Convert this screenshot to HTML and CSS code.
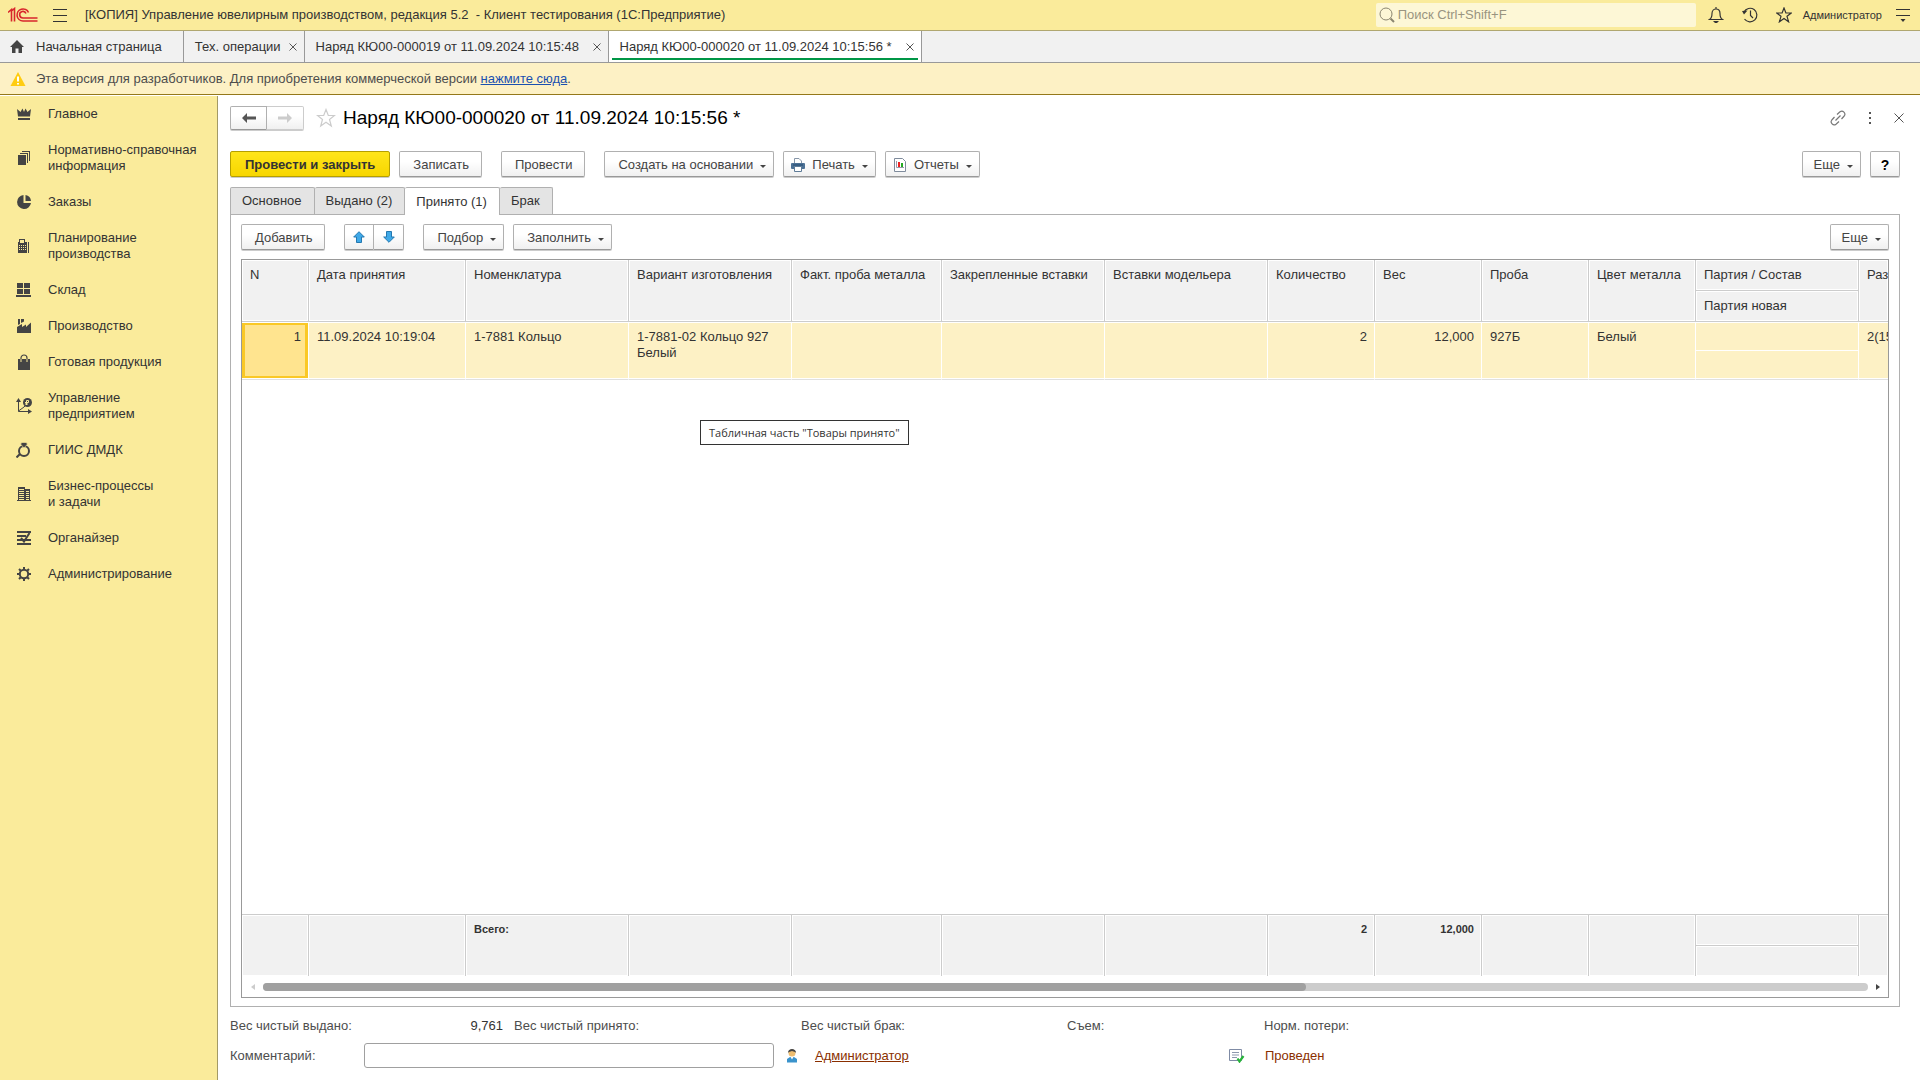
FILE: index.html
```html
<!DOCTYPE html>
<html lang="ru">
<head>
<meta charset="utf-8">
<title>Наряд КЮ00-000020 от 11.09.2024 10:15:56 *</title>
<link rel="stylesheet" href="styles.css">
</head>
<body>
<header class="topbar">
  <svg class="logo" width="30" height="16" viewBox="0 0 30 16" fill="none" stroke="#d8262c" stroke-width="1.600"><path d="M0 5.500L3.500 2.500V14.500M6.500 14.500V1.500L3.500 4"/><path d="M20.500 5.500A6 6 0 1 0 15 14H29.500"/><path d="M18 6.500A3.300 3.300 0 1 0 15 11H29.500"/></svg>
  <button class="icon-btn menu-btn" aria-label="Меню"><svg width="14" height="14" viewBox="0 0 14 14" stroke="#333" fill="none"><path d="M0 1.500H14M0 7.500H14M0 13.500H14"/></svg></button>
  <div class="app-title">[КОПИЯ] Управление ювелирным производством, редакция 5.2&nbsp; - Клиент тестирования (1С:Предприятие)</div>
  <label class="search">
    <svg width="16" height="16" viewBox="0 0 16 16" fill="none" stroke="#8b8670"><circle cx="7" cy="7" r="6"/><path d="M11.500 11.500L15 15" stroke-width="2"/></svg>
    <input type="search" placeholder="Поиск Ctrl+Shift+F" aria-label="Поиск">
  </label>
  <div class="top-icons">
    <button class="icon-btn" aria-label="Уведомления"><svg width="16" height="16" viewBox="0 0 16 16" fill="none" stroke="#333" stroke-width="1.200"><path d="M1.500 12.500C4 11 4 9 4 6.500C4 3.500 6 2 8 2C10 2 12 3.500 12 6.500C12 9 12 11 14.500 12.500ZM8 0V2"/><path d="M5 14H11L9 16H7Z" fill="#333" stroke="none"/></svg></button>
    <button class="icon-btn" aria-label="История"><svg width="16" height="16" viewBox="0 0 16 16" fill="none" stroke="#333" stroke-width="1.200"><path d="M2 5A6.800 6.800 0 1 1 2.500 12"/><path d="M8.500 3.500V8.500L11 11"/><path d="M0 4L5.500 3.500L2 7.500Z" fill="#333" stroke="none"/></svg></button>
    <button class="icon-btn" aria-label="Избранное"><svg width="16" height="16" viewBox="0 0 16 16" fill="none" stroke="#333" stroke-width="1.200"><path d="M8 1L9.900 6H15.200L11 9.300L12.600 14.800L8 11.500L3.400 14.800L5 9.300L.8 6H6.100Z"/></svg></button>
  </div>
  <a class="user" href="#">Администратор</a>
  <button class="icon-btn" aria-label="Настройки"><svg width="14" height="14" viewBox="0 0 14 14" fill="none" stroke="#333"><path d="M0 1.500H14M0 7.500H14"/><path d="M4.500 11H9.500L7 14Z" fill="#333" stroke="none"/></svg></button>
</header>

<nav class="windows" aria-label="Открытые окна">
  <a class="win home" href="#"><svg width="14" height="13" viewBox="0 0 14 13" fill="#444"><path d="M7 0L14 7H12V13H8.500V8.500H5.500V13H2V7H0Z"/></svg>Начальная страница</a>
  <div class="win"><a href="#">Тех. операции</a><button class="icon-btn" aria-label="Закрыть"><svg class="x" width="8" height="8" viewBox="0 0 8 8"><path d="M.5.5L7.500 7.500M7.500.5L.5 7.500"/></svg></button></div>
  <div class="win doc"><a href="#">Наряд КЮ00-000019 от 11.09.2024 10:15:48</a><button class="icon-btn" aria-label="Закрыть"><svg class="x" width="8" height="8" viewBox="0 0 8 8"><path d="M.5.5L7.500 7.500M7.500.5L.5 7.500"/></svg></button></div>
  <div class="win doc current"><a href="#">Наряд КЮ00-000020 от 11.09.2024 10:15:56 *</a><button class="icon-btn" aria-label="Закрыть"><svg class="x" width="8" height="8" viewBox="0 0 8 8"><path d="M.5.5L7.500 7.500M7.500.5L.5 7.500"/></svg></button></div>
</nav>

<div class="notice">
  <svg width="16" height="14" viewBox="0 0 16 14"><path d="M8 0L15.500 14H.5Z" fill="#fc1"/><path d="M7 4.500H9V9.500H7ZM7 11H9V12.500H7Z" fill="#fff"/></svg>
  <p>Эта версия для разработчиков. Для приобретения коммерческой версии <a href="#">нажмите сюда</a>.</p>
</div>

<div class="workspace">
<nav class="sections" aria-label="Разделы">
  <a href="#"><svg width="16" height="16" viewBox="0 0 16 16"><path d="M1 3L4.500 6L6.500 2.500L8 6L9.500 2.500L11.500 6L15 3L14 10.500H2ZM2 12H14V14H2Z"/></svg><span>Главное</span></a>
  <a href="#"><svg width="16" height="16" viewBox="0 0 16 16"><path d="M2 5H10V15H2ZM4 3H12V13H11V4H4ZM6 1H14V11H13V2H6Z"/></svg><span>Нормативно-справочная информация</span></a>
  <a href="#"><svg width="16" height="16" viewBox="0 0 16 16"><path d="M7.500 1A7 7 0 1 0 15 9H7.500ZM9.500 1V7H15A6.500 6.500 0 0 0 9.500 1Z"/></svg><span>Заказы</span></a>
  <a href="#"><svg width="16" height="16" viewBox="0 0 16 16"><path fill-rule="evenodd" d="M3 1H9V4H11V15H2V4H3ZM4 2V5H8V2ZM3 7V8H4V7ZM5 7V8H6V7ZM7 7V8H8V7ZM9 7V8H10V7ZM3 9V10H4V9ZM5 9V10H6V9ZM7 9V10H8V9ZM9 9V10H10V9ZM3 11V12H4V11ZM5 11V12H6V11ZM7 11V12H8V11ZM9 11V12H10V11ZM12 4H13V15H12Z"/></svg><span>Планирование производства</span></a>
  <a href="#"><svg width="16" height="16" viewBox="0 0 16 16"><path d="M1 1H7V6H1ZM8 1H14V6H8ZM1 7H7V12H1ZM8 7H14V12H8ZM0 13H15V15H0Z"/></svg><span>Склад</span></a>
  <a href="#"><svg width="16" height="16" viewBox="0 0 16 16"><path d="M1 15V9L6 6V9L10 6.500V9L15 4.500V15ZM2 1H4V6L2 7ZM5 1H8V3.500L5 5Z"/></svg><span>Производство</span></a>
  <a href="#"><svg width="16" height="16" viewBox="0 0 16 16"><path d="M2 5H14V16H2Z"/><path d="M5 8V4A3 3 0 0 1 11 4V8" fill="none" stroke="#444" stroke-width="1.200"/><path d="M5 5V8M11 5V8" stroke="#faeb9b"/></svg><span>Готовая продукция</span></a>
  <a href="#"><svg width="16" height="16" viewBox="0 0 16 16"><path d="M2.500 1V13.500H14M2.500 13L8 9L10 7" fill="none" stroke="#444"/><path d="M0 4L2.500 0L5 4ZM12 11L16 13.500L12 16Z"/><circle cx="11.500" cy="4.500" r="4.500"/><path d="M10.500 7V2.500H12.500V4.500H9M9 6H12" stroke="#faeb9b" fill="none"/></svg><span>Управление предприятием</span></a>
  <a href="#"><svg width="16" height="16" viewBox="0 0 16 16"><circle cx="8" cy="9" r="5" fill="none" stroke="#444" stroke-width="2"/><path d="M4.500 2L6 .5H10L11.500 2L8 6Z" stroke="#faeb9b" stroke-width=".6"/><path d="M.5 15.500L4 12" stroke="#444" stroke-width="2"/></svg><span>ГИИС ДМДК</span></a>
  <a href="#"><svg width="16" height="16" viewBox="0 0 16 16"><path fill-rule="evenodd" d="M2 1H9V3H14V14H15V15H1V14H2ZM3 3V4H8V3ZM3 5V6H8V5ZM3 7V8H8V7ZM3 9V10H8V9ZM3 11V12H8V11ZM3 13V14H8V13ZM10 5V6H13V5ZM10 7V8H13V7ZM10 9V10H13V9ZM10 11V12H13V11ZM10 13V14H13V13Z"/></svg><span>Бизнес-процессы<br>и задачи</span></a>
  <a href="#"><svg width="16" height="16" viewBox="0 0 16 16"><path d="M1 2H15M1 6H10M1 10H15M1 14H15M5 8L8 11.500L13.500 3" fill="none" stroke="#444" stroke-width="2"/></svg><span>Органайзер</span></a>
  <a href="#"><svg width="16" height="16" viewBox="0 0 16 16"><g fill="none" stroke="#444" stroke-width="2"><circle cx="8" cy="8" r="4.200"/><path d="M8 1V3.500M8 12.500V15M1 8H3.500M12.500 8H15M3 3L4.800 4.800M11.200 11.200L13 13M13 3L11.200 4.800M4.800 11.200L3 13"/></g></svg><span>Администрирование</span></a>
</nav>

<main class="form">
  <div class="title-row">
    <div class="pair">
      <button class="btn nav-btn" aria-label="Назад"><svg width="14" height="10" viewBox="0 0 14 10" fill="#555"><path d="M0 5L5 0V3.500H14V6.500H5V10Z"/></svg></button><button class="btn nav-btn faded" aria-label="Вперед" disabled><svg width="14" height="10" viewBox="0 0 14 10" fill="#ccc"><path d="M14 5L9 0V3.500H0V6.500H9V10Z"/></svg></button>
    </div>
    <button class="icon-btn" aria-label="В избранное"><svg width="20" height="20" viewBox="0 0 20 20" fill="none" stroke="#ccc" stroke-width="1.200"><path d="M10 1.500L12.300 7.500H18.500L13.500 11.500L15.300 18L10 14.200L4.700 18L6.500 11.500L1.500 7.500H7.700Z"/></svg></button>
    <h1>Наряд КЮ00-000020 от 11.09.2024 10:15:56 *</h1>
    <div class="title-tools">
      <button class="icon-btn" aria-label="Ссылка"><svg width="16" height="16" viewBox="0 0 16 16" fill="none" stroke="#777" stroke-width="1.200"><path d="M7 4.500L10 1.800A3 3 0 0 1 14.200 6L11.500 9M9 11.500L6 14.200A3 3 0 0 1 1.800 10L4.500 7M5.500 10.500L10.500 5.500"/></svg></button>
      <button class="icon-btn" aria-label="Ещё"><svg width="4" height="12" viewBox="0 0 4 12" fill="#555"><path d="M1 0H3V2H1ZM1 5H3V7H1ZM1 10H3V12H1Z"/></svg></button>
      <button class="icon-btn" aria-label="Закрыть"><svg class="x" width="10" height="10" viewBox="0 0 10 10"><path d="M.5.5L9.500 9.500M9.500.5L.5 9.500"/></svg></button>
    </div>
  </div>

  <div class="commands">
    <button class="btn primary">Провести и закрыть</button>
    <button class="btn">Записать</button>
    <button class="btn spaced">Провести</button>
    <button class="btn drop spaced">Создать на основании</button>
    <button class="btn drop with-icon"><svg width="14" height="14" viewBox="0 0 14 14"><path d="M3.500 5V.5H8L10.500 3V5" fill="#fff" stroke="#8796a8"/><rect y="5" width="14" height="6" rx="1" fill="#4d7296"/><path d="M2 7H12" stroke="#254a70"/><path d="M3.500 8.500H10.500V13.500H3.500Z" fill="#fff" stroke="#5f7c98"/></svg>Печать</button>
    <button class="btn drop with-icon"><svg width="14" height="14" viewBox="0 0 14 14"><path d="M1.500.5H9.500L12.500 3.500V13.500H1.500Z" fill="#fff" stroke="#7f8b9c"/><path d="M3.500 3V9.500H11" fill="none" stroke="#99a"/><path d="M5 4H7V9H5Z" fill="#e22"/><path d="M8 5H10V9H8Z" fill="#2a2"/></svg>Отчеты</button>
    <button class="btn drop more">Еще</button>
    <button class="btn help">?</button>
  </div>

  <div class="tabs" role="tablist">
    <button role="tab">Основное</button>
    <button role="tab">Выдано (2)</button>
    <button role="tab" aria-selected="true">Принято (1)</button>
    <button role="tab">Брак</button>
  </div>

  <section class="panel">
    <div class="commands inner">
      <button class="btn">Добавить</button>
      <div class="pair spaced">
        <button class="btn move" aria-label="Вверх"><svg width="12" height="12" viewBox="0 0 12 12" fill="#3fa9e8" stroke="#2478b0"><path d="M6 .7L11.300 6H8.500V11.500H3.500V6H.7Z"/></svg></button><button class="btn move" aria-label="Вниз"><svg width="12" height="12" viewBox="0 0 12 12" fill="#3fa9e8" stroke="#2478b0"><path d="M6 11.300L11.300 6H8.500V.5H3.500V6H.7Z"/></svg></button>
      </div>
      <button class="btn drop spaced">Подбор</button>
      <button class="btn drop">Заполнить</button>
      <button class="btn drop more">Еще</button>
    </div>

    <div class="grid">
      <table>
        <colgroup><col class="c-n"><col class="c-date"><col class="c-wide"><col class="c-wide"><col class="c-fact"><col class="c-wide"><col class="c-wide"><col class="c-num"><col class="c-num"><col class="c-num"><col class="c-num"><col class="c-wide"><col></colgroup>
        <thead>
          <tr><th rowspan="2">N</th><th rowspan="2">Дата принятия</th><th rowspan="2">Номенклатура</th><th rowspan="2">Вариант изготовления</th><th rowspan="2">Факт. проба металла</th><th rowspan="2">Закрепленные вставки</th><th rowspan="2">Вставки модельера</th><th rowspan="2">Количество</th><th rowspan="2">Вес</th><th rowspan="2">Проба</th><th rowspan="2">Цвет металла</th><th>Партия / Состав</th><th rowspan="2">Размер</th></tr>
          <tr><th>Партия новая</th></tr>
        </thead>
        <tbody>
          <tr><td rowspan="2" class="num active">1</td><td rowspan="2">11.09.2024 10:19:04</td><td rowspan="2">1-7881 Кольцо</td><td rowspan="2" class="wrap">1-7881-02 Кольцо 927 Белый</td><td rowspan="2"></td><td rowspan="2"></td><td rowspan="2"></td><td rowspan="2" class="num">2</td><td rowspan="2" class="num">12,000</td><td rowspan="2">927Б</td><td rowspan="2">Белый</td><td class="split"></td><td rowspan="2">2(15)</td></tr>
          <tr><td></td></tr>
        </tbody>
      </table>
      <div class="tip" role="tooltip">Табличная часть "Товары принято"</div>
      <table class="totals">
        <colgroup><col class="c-n"><col class="c-date"><col class="c-wide"><col class="c-wide"><col class="c-fact"><col class="c-wide"><col class="c-wide"><col class="c-num"><col class="c-num"><col class="c-num"><col class="c-num"><col class="c-wide"><col></colgroup>
        <tfoot>
          <tr><td rowspan="2"></td><td rowspan="2"></td><td rowspan="2">Всего:</td><td rowspan="2"></td><td rowspan="2"></td><td rowspan="2"></td><td rowspan="2"></td><td rowspan="2" class="num">2</td><td rowspan="2" class="num">12,000</td><td rowspan="2"></td><td rowspan="2"></td><td class="split"></td><td rowspan="2"></td></tr>
          <tr><td></td></tr>
        </tfoot>
      </table>
      <div class="scroll">
        <svg width="4" height="6" viewBox="0 0 4 6" fill="#ccc"><path d="M4 0V6L0 3Z"/></svg>
        <div class="track"><div class="thumb"></div></div>
        <svg width="4" height="6" viewBox="0 0 4 6" fill="#444"><path d="M0 0V6L4 3Z"/></svg>
      </div>
    </div>
  </section>

  <div class="weights">
    <span>Вес чистый выдано:</span><span class="value">9,761</span><span>Вес чистый принято:</span><span>Вес чистый брак:</span><span>Съем:</span><span>Норм. потери:</span>
  </div>
  <div class="bottom">
    <label for="comment">Комментарий:</label>
    <input id="comment" type="text">
    <svg width="12" height="14" viewBox="0 0 12 14"><circle cx="6" cy="4" r="3.500" fill="#eebd70"/><path d="M2 4C2 1 4 0 6 0S10 1 10 4L9 3L6 2L3 3Z" fill="#444"/><path d="M1 13.500V10L4 8H8L11 10V13.500Z" fill="#3a93cc"/><path d="M4.500 8H7.500L6 10.500Z" fill="#fff"/></svg>
    <a class="author" href="#">Администратор</a>
    <div class="state"><svg width="16" height="14" viewBox="0 0 16 14"><path d="M.5.5H12.500V11.500H.5Z" fill="#fff" stroke="#7f8ba5"/><path d="M3 3.500H10M3 6H10M3 8.500H8" stroke="#8d98ae"/><path d="M8.500 9.500L10.500 12.500L14.500 7" fill="none" stroke="#27b33a" stroke-width="2.200"/></svg>Проведен</div>
  </div>
</main>
</div>
</body>
</html>
```
FILE: styles.css
```css
* { box-sizing: border-box; }

body {
  margin: 0;
  min-height: 100vh;
  display: flex;
  flex-direction: column;
  background: #fff;
  color: #333;
  font: 13px/16px "Liberation Sans", Arial, sans-serif;
}

button, input { font: inherit; color: inherit; }
a { color: inherit; text-decoration: none; }
svg { display: block; flex: none; }
.x { fill: none; stroke: #555; }

.icon-btn {
  display: flex;
  padding: 0;
  border: 0;
  background: none;
}

/* Top bar */
.topbar {
  display: flex;
  align-items: center;
  height: 31px;
  padding: 0 10px 0 8px;
  background: #faeb9b;
  border-bottom: 1px solid #b0a770;
}
.menu-btn { margin: 0 18px 0 15px; }
.app-title { flex: 1; white-space: nowrap; }
.search {
  display: flex;
  align-items: center;
  gap: 3px;
  width: 320px;
  height: 24px;
  padding-left: 3px;
  border-radius: 2px;
  background: #fdf7d6;
}
.search input {
  flex: 1;
  min-width: 0;
  padding: 0;
  border: 0;
  outline: 0;
  background: none;
}
.search input::placeholder { color: #999480; opacity: 1; }
.top-icons { display: flex; gap: 18px; margin: 0 11px 0 12px; }
.user { margin-right: 14px; font-size: 11px; }

/* Open windows */
.windows {
  display: flex;
  height: 32px;
  background: #f1f1f1;
  border-bottom: 1px solid #999;
}
.win {
  display: flex;
  align-items: center;
  justify-content: space-between;
  gap: 8px;
  padding: 0 7px 0 11px;
  border-right: 1px solid #999;
  white-space: nowrap;
}
.doc { min-width: 304px; }
.home { gap: 12px; padding: 0 21px 0 10px; }
.current {
  min-width: 313px;
  background:
    linear-gradient(#009646, #009646) 50% calc(100% - 2px) / calc(100% - 6px) 2px no-repeat,
    #fff;
}

/* Version notice */
.notice {
  display: flex;
  align-items: center;
  gap: 10px;
  height: 32px;
  padding: 0 10px;
  background: #fdf1c5;
  border-bottom: 1px solid #94781a;
  color: #4d4d4d;
}
.notice p { margin: 0; }
.notice a { color: #1a50b0; text-decoration: underline; }

.workspace { flex: 1; display: flex; }

/* Sections */
.sections {
  flex: none;
  width: 218px;
  margin-top: 1px;
  background: #faeb9b;
  border-right: 1px solid #a39a66;
}
.sections a {
  display: flex;
  align-items: center;
  gap: 16px;
  padding: 10px 10px 10px 16px;
}
.sections svg { fill: #444; }

/* Form */
.form {
  flex: 1;
  min-width: 0;
  display: flex;
  flex-direction: column;
  padding: 10px 20px 12px 12px;
}
.title-row { display: flex; align-items: center; height: 25px; }
h1 {
  margin: 0 0 0 7px;
  color: #000;
  font-size: 19px;
  line-height: 24px;
  font-weight: 400;
}
.title-row .pair { margin-right: 12px; }
.title-tools {
  display: flex;
  align-items: center;
  gap: 22px;
  margin: 0 -4px 0 auto;
}

.pair { display: flex; }
.btn {
  display: flex;
  align-items: center;
  justify-content: center;
  height: 26px;
  padding: 1px 12px 0 13px;
  border: 1px solid #b0b0b0;
  border-bottom-color: #999;
  border-radius: 2px;
  background: linear-gradient(#fff 40%, #f0f0f0);
  box-shadow: 0 1px 0 #ccc;
  color: #444;
  white-space: nowrap;
}
.pair .btn:first-child { border-radius: 2px 0 0 2px; }
.pair .btn:last-child { border-left: 0; border-radius: 0 2px 2px 0; }
.nav-btn { width: 37px; height: 24px; padding: 0; }
.faded { border-color: #ccc; }
.move { width: 30px; padding: 0; }
.primary {
  padding: 1px 14px 0;
  border-color: #b59f00;
  background: linear-gradient(#ffe51a, #f7d600);
  color: #333;
  font-weight: 700;
}
.drop { padding-right: 7px; }
.drop::after {
  content: "";
  margin: 3px 0 0 7px;
  border: 3px solid transparent;
  border-top-color: #444;
  border-bottom: 0;
}
.with-icon { padding-left: 7px; }
.with-icon svg { margin-right: 7px; }
.help { width: 30px; padding: 1px 0 0; color: #000; font-size: 14px; font-weight: 700; }

.commands { display: flex; gap: 9px; margin-top: 21px; }
.commands .spaced { margin-left: 10px; }
.commands .more { margin-left: auto; padding-left: 11px; }
.inner { margin: 9px 0 0; }

.tabs { display: flex; margin-top: 10px; position: relative; }
.tabs button {
  height: 27px;
  padding: 0 12px 0 11px;
  border: 1px solid #b0b0b0;
  border-bottom: 0;
  border-radius: 2px 2px 0 0;
  background: #e4e4e4;
}
.tabs button + button { border-left: 0; }
.tabs [aria-selected] { height: 28px; margin-bottom: -1px; background: #fff; }

.panel {
  flex: 1;
  display: flex;
  flex-direction: column;
  padding: 0 10px 8px;
  border: 1px solid #b0b0b0;
}

/* Data grid */
.grid {
  flex: 1;
  position: relative;
  display: flex;
  flex-direction: column;
  margin-top: 9px;
  border: 1px solid #999;
  overflow: hidden;
}
table { width: 100%; table-layout: fixed; border-spacing: 0; }
.c-n { width: 67px; }
.c-date { width: 157px; }
.c-wide { width: 163px; }
.c-fact { width: 150px; }
.c-num { width: 107px; }

th, td {
  padding: 7px 6px 0 8px;
  text-align: left;
  vertical-align: top;
  font-weight: 400;
  white-space: nowrap;
  overflow: hidden;
}
th, tfoot td {
  height: 31px;
  background: #f1f1f1;
  border-right: 1px solid #ccc;
  border-bottom: 1px solid #ccc;
  box-shadow: inset 0 0 0 1px #fff;
}
tbody td {
  height: 29px;
  background: #fdf1c5;
  border-right: 1px solid #fff;
  border-bottom: 1px solid #e0e0e0;
  box-shadow: inset 0 1px #fff, inset 0 -1px #fff;
}
tbody .split { border-bottom-color: #fff; box-shadow: inset 0 1px #fff; }
tbody tr:last-child td { box-shadow: inset 0 -1px #fff; }
.wrap { white-space: normal; }
.num { text-align: right; padding-right: 7px; }
tbody .active {
  background: #ffe48f;
  box-shadow: inset 0 1px #fff, inset 0 -1px #fff, inset 0 0 0 3px #fac826;
}
tr > :last-child[rowspan] { border-right: 0; }
.totals { margin-top: auto; border-top: 1px solid #ccc; font-size: 11px; }
.totals td { padding-top: 6px; font-weight: 700; border-bottom: 0; }
.totals .split { border-bottom: 1px solid #ccc; }
.totals tr:last-child td { height: 30px; }

.tip {
  position: absolute;
  left: 458px;
  top: 160px;
  padding: 3px 8px;
  border: 1px solid #333;
  background: #fff;
  font: 11px/17px "Open Sans", "Noto Sans", sans-serif;
}

.scroll { display: flex; align-items: center; gap: 8px; height: 21px; padding: 0 8px 0 9px; }
.track { flex: 1; height: 8px; border-radius: 4px; background: #ccc; }
.thumb { width: 65%; height: 8px; border-radius: 4px; background: #a0a0a0; }

/* Footer fields */
.weights {
  display: grid;
  grid-template-columns: 134px 139px 298px 266px 197px auto;
  align-items: center;
  height: 36px;
  padding-top: 1px;
  color: #4d4d4d;
}
.weights .value { text-align: right; color: #333; }
.weights .value + span { padding-left: 11px; }
.bottom { display: flex; align-items: center; color: #4d4d4d; }
.bottom label { width: 134px; }
.bottom input {
  width: 410px;
  height: 25px;
  margin-right: 12px;
  border: 1px solid #a0a0a0;
  border-radius: 3px;
}
.author { width: 414px; margin-left: 17px; color: #8a2f00; text-decoration: underline; }
.state { display: flex; align-items: center; gap: 20px; color: #8a2f00; }
```
